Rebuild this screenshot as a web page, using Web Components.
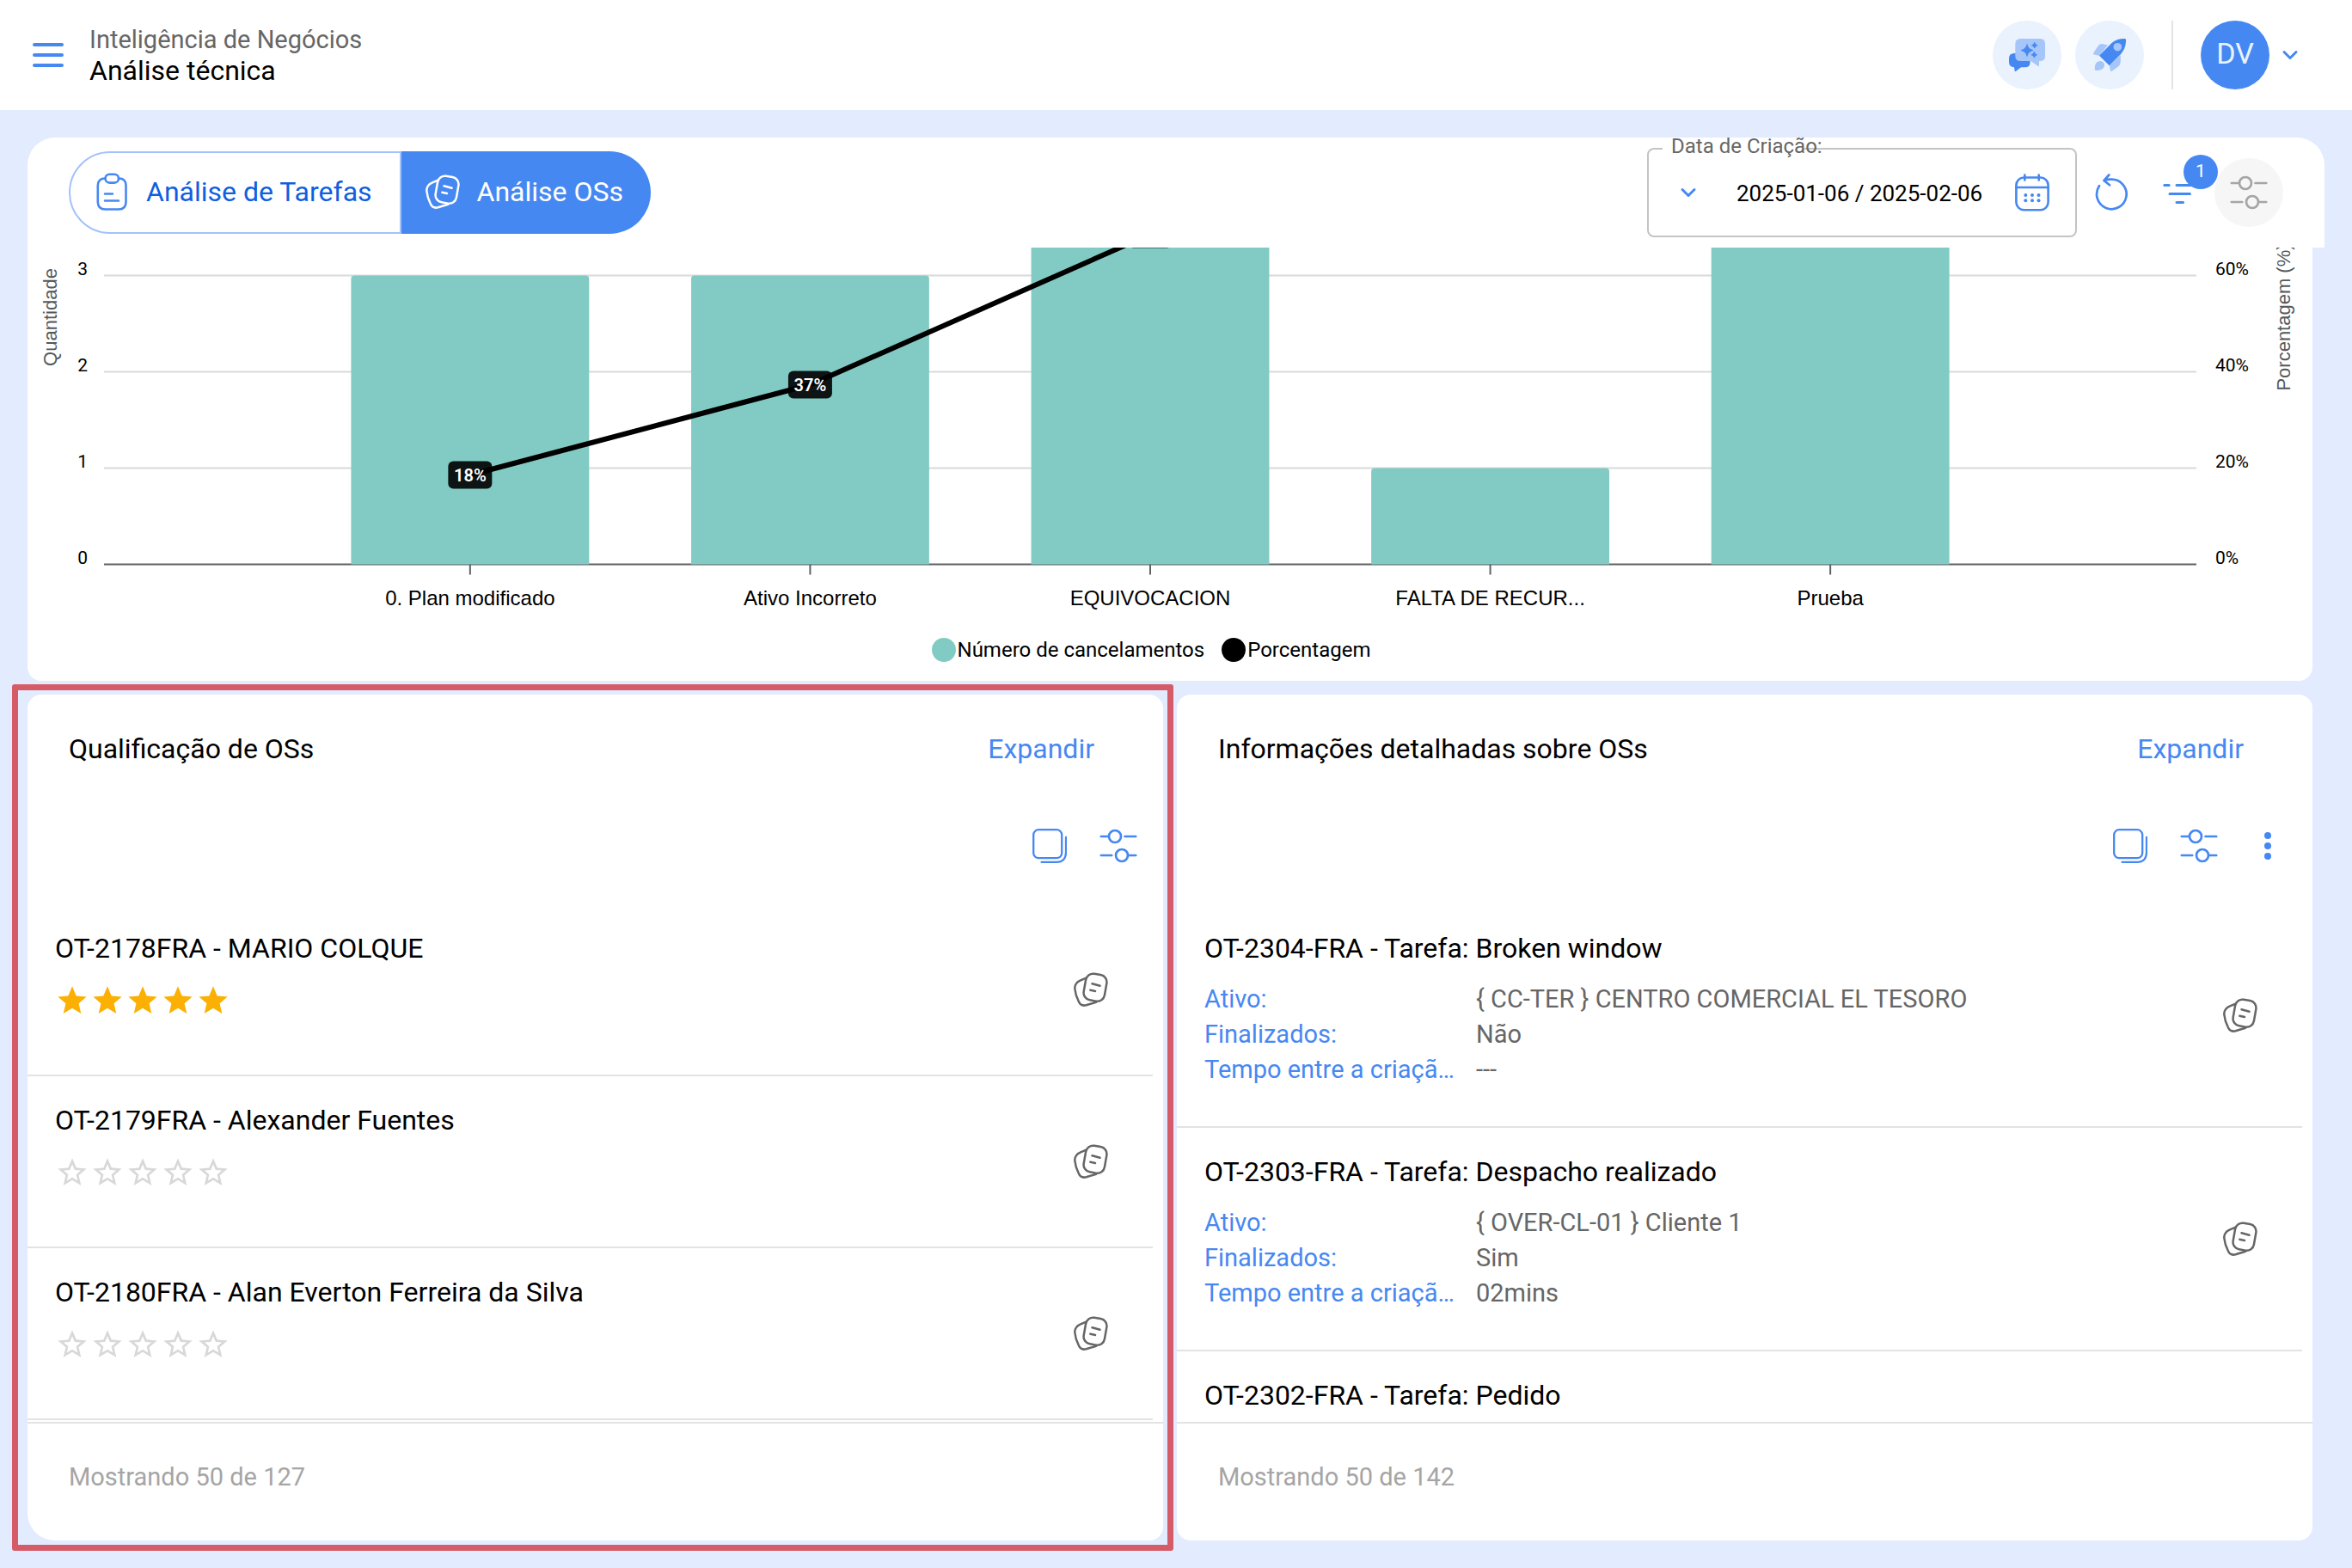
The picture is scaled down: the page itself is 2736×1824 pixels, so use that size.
<!DOCTYPE html>
<html lang="pt">
<head>
<meta charset="utf-8">
<title>Análise técnica</title>
<style>
  :root {
    --blue: #4688f2;
    --blue-dark: #0f5fe0;
    --blue-line: #a3c2fa;
    --page: #e2ecfe;
    --grey: #666;
    --line: #e3e3e3;
  }
  * { box-sizing: border-box; }
  body {
    margin: 0;
    height: 100vh;
    background: var(--page);
    color: #000;
    font: 32px/38px Roboto, "Liberation Sans", sans-serif;
  }
</style>
</head>
<body>
<bi-app>
  <app-header slot="header" section="Inteligência de Negócios" heading="Análise técnica" initials="DV"></app-header>
  <app-toolbar slot="toolbar"></app-toolbar>
  <combo-chart slot="chart"></combo-chart>

  <data-card slot="card" heading="Qualificação de OSs" summary="Mostrando 50 de 127" highlighted>
    <icon-button slot="tools" icon="copy" label="Copiar"></icon-button>
    <icon-button slot="tools" icon="sliders" label="Configurar"></icon-button>
    <list-row heading="OT-2178FRA - MARIO COLQUE"><star-rating value="5"></star-rating></list-row>
    <list-row heading="OT-2179FRA - Alexander Fuentes"><star-rating value="0"></star-rating></list-row>
    <list-row heading="OT-2180FRA - Alan Everton Ferreira da Silva"><star-rating value="0"></star-rating></list-row>
  </data-card>

  <data-card slot="card" heading="Informações detalhadas sobre OSs" summary="Mostrando 50 de 142">
    <icon-button slot="tools" icon="copy" label="Copiar"></icon-button>
    <icon-button slot="tools" icon="sliders" label="Configurar"></icon-button>
    <icon-button slot="tools" icon="dots" label="Mais opções"></icon-button>
    <list-row tall heading="OT-2304-FRA - Tarefa: Broken window"><order-facts asset="{ CC-TER } CENTRO COMERCIAL EL TESORO" finished="Não" elapsed="---"></order-facts></list-row>
    <list-row tall heading="OT-2303-FRA - Tarefa: Despacho realizado"><order-facts asset="{ OVER-CL-01 } Cliente 1" finished="Sim" elapsed="02mins"></order-facts></list-row>
    <list-row tall heading="OT-2302-FRA - Tarefa: Pedido"></list-row>
  </data-card>
</bi-app>

<script>
const line = (w) => `fill="none" stroke="currentColor" stroke-width="${w}" stroke-linecap="round" stroke-linejoin="round"`;
const ICONS = {
  menu: [40, 40, `<g ${line(4)}><path d="M4 8H36M4 20H36M4 32H36"/></g>`],
  chevron: [24, 24, `<g ${line(3)}><path d="M5 8.500L12 15.500L19 8.500"/></g>`],
  chat: [42, 38, `<path fill="#4688f2" d="M6 17H18Q24.500 17 24.500 23V28Q24.500 33.300 18.500 33.300H14L7.800 37.900Q6.800 38.300 6.600 37.200L6 33.300Q0 33 0 27V23Q0 17 6 17Z"/>
    <path fill="#a6c6f9" d="M13.500 0H36Q42 0 42 6V20Q42 26 36 26H35V31Q35 32.500 33.500 31.800L25.500 26H13.500Q7.300 26 7.300 20V6Q7.300 0 13.500 0Z"/>
    <path fill="#4688f2" d="M21 6.500Q22.200 12.300 28 13.500Q22.200 14.700 21 20.500Q19.800 14.700 14 13.500Q19.800 12.300 21 6.500ZM29.700 4.300Q30.300 7.100 33.100 7.700Q30.300 8.300 29.700 11.100Q29.100 8.300 26.300 7.700Q29.100 7.100 29.700 4.300ZM29.300 15.300Q29.900 18.100 32.700 18.700Q29.900 19.300 29.300 22.100Q28.700 19.300 25.900 18.700Q28.700 18.100 29.300 15.300Z" stroke="#4688f2" stroke-width=".8"/>`],
  rocket: [38, 38, `<g fill="#a6c6f9"><path d="M1 18.500Q-.4 18 .3 16.600L6 8Q7.500 6 10 6L17 7.500L7 19.700Z"/><path d="M31.800 19V27Q31.500 30 29.500 32L21.800 37.700Q20.300 38.500 20 37L18.700 31Z"/><path d="M2 36.300C1.300 31 3 26.600 7.500 26C11.500 25.500 14.300 29.500 12.600 33C11 36 6.500 37.600 2.800 37Q2.100 37 2 36.300Z"/></g>
    <path fill="#4688f2" d="M7 19.700L21 5.500C26 1 31 0 36.800 0Q38 0 38 1.200C38.300 8 36 13.500 32 18L18.700 31.300Z"/><circle cx="28.300" cy="9.700" r="4.800" fill="#a6c6f9"/>`],
  clipboard: [40, 44, `<g ${line(2.6)}><path d="M12.500 6.500Q3.800 6.500 3.800 15V34Q3.800 42.500 12.500 42.500H28Q36.500 42.500 36.500 34V15Q36.500 6.500 28 6.500"/><rect x="12.500" y="1.800" width="15.500" height="9.800" rx="4.900"/><path d="M12 24.500H21M12 32.500H28"/></g>`],
  orders: [40, 40, `<g ${line(2.5)}><path d="M14 6.800L8 9.300C3 11.500 1 14 1.300 19C1.800 24.500 3.500 29.500 5.800 34C7.500 38 10.500 39.300 14.500 38.300L26 34.800"/><rect x="12.700" y="2.200" width="24.600" height="31" rx="8.500" transform="rotate(10 25 17.700)"/><path d="M21.500 13.300L30.500 15.800M19.300 20.700L25 22"/></g>`],
  calendar: [40, 44, `<g ${line(2.6)}><rect x="1.400" y="4.500" width="37.200" height="37.800" rx="9"/><path d="M1.400 16H38.600M11.300 1.500V7.500M27.700 1.500V7.500"/></g><g fill="currentColor"><circle cx="12.300" cy="25" r="2"/><circle cx="20" cy="25" r="2"/><circle cx="27.500" cy="25" r="2"/><circle cx="12.300" cy="31.300" r="2"/><circle cx="20" cy="31.300" r="2"/><circle cx="27.500" cy="31.300" r="2"/></g>`],
  refresh: [38, 44, `<g ${line(2.7)}><path d="M5 14.200A17.300 17.300 0 1 0 18.700 6.600Q15 6.500 10.500 8M16.300 1.500L10.500 8L17 13.300"/></g>`],
  filter: [40, 40, `<g ${line(3)}><path d="M1.800 11.500H7.200M16 11.500H38M8 21.500H31.500M16 31.500H23.500"/></g>`],
  sliders: [44, 44, `<g ${line(2.7)}><circle cx="18" cy="11" r="7"/><circle cx="26" cy="33" r="7"/><path d="M1.800 11H10M29.500 11H42.200M1.800 33H14.200M34 33H42.200"/></g>`],
  copy: [40, 40, `<g ${line(2.3)}><rect x="1.200" y="1.200" width="33" height="33" rx="6"/><path d="M39 9.800V28Q38.500 38.800 29 38.800H10.500"/></g>`],
  dots: [40, 40, `<g fill="currentColor"><circle cx="20" cy="8" r="4"/><circle cx="20" cy="20" r="4"/><circle cx="20" cy="32" r="4"/></g>`],
  star: [40, 40, `<path fill="currentColor" transform="scale(1.6667)" d="M12 17.270L18.180 21l-1.640-7.030L22 9.240l-7.190-.61L12 2 9.190 8.630 2 9.240l5.460 4.730L5.820 21z"/>`],
  starEmpty: [40, 40, `<path fill="currentColor" transform="scale(1.6667)" d="M22 9.240l-7.190-.62L12 2 9.190 8.630 2 9.240l5.460 4.730L5.820 21 12 17.270 18.180 21l-1.630-7.030L22 9.240zM12 15.400l-3.760 2.270 1-4.280-3.320-2.880 4.380-.38L12 6.100l1.710 4.040 4.380.38-3.320 2.880 1 4.280L12 15.400z"/>`]
};
const svg = (name) => {
  const [w, h, body] = ICONS[name];
  return `<svg width="${w}" height="${h}" viewBox="0 0 ${w} ${h}" aria-hidden="true">${body}</svg>`;
};
const RESET = `
  * { box-sizing: border-box; }
  svg { display: block; flex: none; }
  button { font: inherit; color: inherit; border: 0; padding: 0; margin: 0; background: none; cursor: pointer; }`;

class View extends HTMLElement {
  connectedCallback() {
    if (this.shadowRoot) return;
    this.attachShadow({ mode: "open" }).innerHTML = `<style>${RESET}${this.css()}</style>${this.html()}`;
    this.ready();
  }
  a(name) { return this.getAttribute(name) || ""; }
  css() { return ""; }
  html() { return ""; }
  ready() {}
}

customElements.define("icon-button", class extends View {
  css() { return `
    :host { display: block; flex: none; color: var(--blue); }
    button { position: relative; width: 80px; height: 80px; border-radius: 50%; display: flex; align-items: center; justify-content: center; background: var(--button-bg, none); }
    .badge { position: absolute; top: -4px; right: -4px; width: 40px; height: 40px; border-radius: 50%; background: var(--blue); color: #fff; font-size: 21px; line-height: 38px; text-align: center; }`; }
  html() {
    const badge = this.a("badge");
    return `<button type="button" aria-label="${this.a("label")}">${svg(this.a("icon"))}${badge ? `<span class="badge">${badge}</span>` : ""}</button>`;
  }
});

customElements.define("app-header", class extends View {
  css() { return `
    :host { display: flex; align-items: center; height: 128px; padding: 0 60px 0 16px; background: #fff; }
    .titles { flex: 1; margin-left: 8px; }
    p, h1 { margin: 0; font-weight: 400; line-height: 36px; }
    p { font-size: 29px; color: var(--grey); }
    h1 { font-size: 32px; }
    .actions { display: flex; align-items: center; gap: 16px; --button-bg: #e9f2fd; }
    .rule { width: 2px; height: 80px; margin: 0 16px; background: var(--line); }
    .user { display: flex; align-items: center; gap: 12px; color: var(--blue); }
    .avatar { width: 80px; height: 80px; border-radius: 50%; background: var(--blue); color: #e9f2fd; font-size: 34px; line-height: 76px; text-align: center; }`; }
  html() { return `
    <icon-button icon="menu" label="Menu"></icon-button>
    <div class="titles"><p>${this.a("section")}</p><h1>${this.a("heading")}</h1></div>
    <div class="actions">
      <icon-button icon="chat" label="Assistente"></icon-button>
      <icon-button icon="rocket" label="Novidades"></icon-button>
      <span class="rule"></span>
      <button class="user" type="button"><span class="avatar">${this.a("initials")}</span>${svg("chevron")}</button>
    </div>`; }
});

customElements.define("date-field", class extends View {
  css() { return `
    :host { position: relative; display: flex; align-items: center; width: 500px; height: 104px; padding: 0 10px 0 6px; border: 2px solid #c4c4c4; border-radius: 8px; }
    .notch { position: absolute; top: -2px; left: 16px; width: 164px; height: 2px; background: #fff; }
    label { position: absolute; top: -18px; left: 26px; font-size: 24px; line-height: 28px; color: var(--grey); white-space: nowrap; }
    input { flex: 1; min-width: 0; border: 0; outline: 0; padding: 2px 0 0 16px; background: none; font: inherit; font-size: 26px; line-height: 36px; color: #000; }`; }
  html() { return `
    <span class="notch"></span><label for="range">${this.a("label")}</label>
    <icon-button icon="chevron" label="Abrir períodos"></icon-button>
    <input id="range" type="text" value="${this.a("value")}">
    <icon-button icon="calendar" label="Abrir calendário"></icon-button>`; }
});

customElements.define("app-toolbar", class extends View {
  css() { return `
    :host { display: flex; align-items: center; height: 128px; padding: 0 48px; background: #fff; border-radius: 32px 32px 0 0; }
    .tabs { display: flex; flex: none; height: 96px; margin-right: auto; }
    .tabs button { display: flex; align-items: center; gap: 20px; padding: 0 32px 4px 28px; font-size: 32px; white-space: nowrap; }
    .tabs button:first-child { padding-bottom: 2px; border: 2px solid var(--blue-line); border-radius: 48px 0 0 48px; color: var(--blue-dark); }
    .tabs button:first-child svg { color: var(--blue); }
    .tabs button:last-child { background: var(--blue); color: #fff; border-radius: 0 48px 48px 0; padding-bottom: 2px; }
    .muted { --button-bg: #f6f6f6; color: #a5a5a5; }
    .raised { z-index: 1; }`; }
  html() { return `
    <div class="tabs">
      <button type="button">${svg("clipboard")}Análise de Tarefas</button>
      <button type="button">${svg("orders")}Análise OSs</button>
    </div>
    <date-field label="Data de Criação:" value="2025-01-06 / 2025-02-06"></date-field>
    <icon-button icon="refresh" label="Atualizar"></icon-button>
    <icon-button class="raised" icon="filter" label="Filtros" badge="1"></icon-button>
    <icon-button class="muted" icon="sliders" label="Configurar"></icon-button>`; }
});

customElements.define("combo-chart", class extends View {
  css() { return `
    :host { display: flex; flex-direction: column; justify-content: flex-end; height: 504px; overflow: hidden; background: #fff; border-radius: 0 0 16px 16px; }
    #plot { flex: none; height: 640px; }
    #plot svg { width: 100%; }
    text { font-family: Roboto, "Liberation Sans", sans-serif; }
    .tick { font-size: 21px; }
    .cat { font: 24px "Liberation Sans", sans-serif; }
    .title { font: 22px "Liberation Sans", sans-serif; fill: #53595c; }
    .tag { font-size: 20px; font-weight: 600; fill: #fff; }
    ul { flex: none; display: flex; justify-content: center; gap: 20px; list-style: none; margin: 14px 134px 22px 90px; padding: 0; font-size: 24px; line-height: 28px; }
    li { display: flex; gap: 2px; }
    i { width: 28px; height: 28px; border-radius: 50%; background: var(--c); }`; }
  html() { return `<div id="plot"></div>
    <ul><li><i style="--c:#81cbc4"></i>Número de cancelamentos</li><li><i style="--c:#000"></i>Porcentagem</li></ul>`; }
  ready() {
    this.draw();
    new ResizeObserver(() => this.draw()).observe(this);
  }
  draw() {
    const data = [["0. Plan modificado", 3], ["Ativo Incorreto", 3], ["EQUIVOCACION", 5], ["FALTA DE RECUR...", 1], ["Prueba", 4]];
    const W = this.clientWidth, H = 640, L = 89, R = W - 135, base = 568.5, step = 112;
    /* everything above this line is scrolled out of the panel */
    const top = 136;
    const inset = (R - L) * 0.0937, slot = (R - L - inset * 2) / data.length, bar = slot * 0.7;
    const total = data.reduce((s, d) => s + d[1], 0);
    let grid = "", bars = "", tags = "", pts = [], sum = 0;
    for (let i = 0; base - i * step > top; i++) {
      const y = base - i * step;
      grid += `<path d="M${L} ${y}H${R}" stroke="${i ? "#dadada" : "#5f6163"}" stroke-width="2"/>
        <text class="tick" x="${L - 19}" y="${y - 1}" text-anchor="end">${i}</text><text class="tick" x="${R + 22}" y="${y - 1}">${i * 20}%</text>`;
    }
    data.forEach(([name, v], i) => {
      const cx = L + inset + slot * (i + 0.5), x = cx - bar / 2, y = base - v * step;
      sum += v;
      const py = base - (sum / total) * 5 * step + 1;
      pts.push(`${cx} ${py}`);
      bars += `<path d="M${x} ${base}V${y + 4}q0 -4 4 -4H${x + bar - 4}q4 0 4 4V${base}Z" fill="#81cbc4"/>
        <path d="M${cx} ${base}v12" stroke="#5f6163" stroke-width="2"/>
        <text class="cat" x="${cx}" y="616" text-anchor="middle">${name}</text>`;
      tags += `<rect x="${cx - 25.5}" y="${py - 16}" width="51" height="32" rx="6" opacity=".9"/>`;
      if (py - 16 > top + 70) tags += `<text class="tag" x="${cx}" y="${py + 7}" text-anchor="middle">${Math.floor(sum / total * 100)}%</text>`;
    });
    this.shadowRoot.getElementById("plot").innerHTML = `<svg height="${H}" viewBox="0 0 ${W} ${H}" role="img" aria-label="Cancelamentos por motivo">
      ${grid}${bars}
      <polyline points="${pts.join(" ")}" fill="none" stroke="#000" stroke-width="6" stroke-linejoin="round"/>${tags}
      <text class="title" text-anchor="middle" transform="translate(34 281) rotate(-90)">Quantidade</text>
      <text class="title" text-anchor="middle" transform="translate(${W - 26} 281) rotate(-90)">Porcentagem (%)</text></svg>`;
  }
});

customElements.define("star-rating", class extends View {
  css() { return `:host { display: flex; gap: 1px; padding-top: 2px; color: #d8d8d8; } .on { color: #fbb003; }`; }
  html() {
    const v = +this.a("value");
    return [1, 2, 3, 4, 5].map((n) => `<span class="${n <= v ? "on" : ""}">${svg(n <= v ? "star" : "starEmpty")}</span>`).join("");
  }
});

customElements.define("order-facts", class extends View {
  css() { return `
    dl { display: grid; grid-template-columns: 300px 1fr; column-gap: 16px; margin: 0; font-size: 29px; line-height: 41px; }
    dt { color: var(--blue); white-space: nowrap; }
    dd { margin: 0; color: var(--grey); }
    :host { display: block; }`; }
  html() { return `<dl>
    <dt>Ativo:</dt><dd>${this.a("asset")}</dd>
    <dt>Finalizados:</dt><dd>${this.a("finished")}</dd>
    <dt>Tempo entre a criaçã…</dt><dd>${this.a("elapsed")}</dd></dl>`; }
});

customElements.define("list-row", class extends View {
  css() { return `
    :host { display: flex; align-items: center; flex: none; height: 200px; padding: 0 32px; border-bottom: 2px solid var(--line); }
    :host([tall]) { height: 260px; }
    .text { flex: 1; align-self: flex-start; padding-top: 32px; }
    h3 { margin: 0 0 20px; font: inherit; line-height: 38px; }
    icon-button { color: var(--grey); }`; }
  html() { return `<div class="text"><h3>${this.a("heading")}</h3><slot></slot></div><icon-button icon="orders" label="Ver OS"></icon-button>`; }
});

customElements.define("data-card", class extends View {
  css() { return `
    :host { position: relative; display: flex; flex: 1 1 0; min-width: 0; }
    section { flex: 1; min-width: 0; display: flex; flex-direction: column; background: #fff; border-radius: 16px; }
    :host([highlighted]) section { border-bottom-left-radius: 32px; }
    :host([highlighted])::after { content: ""; position: absolute; inset: -12px -12px -12px -18px; border: 7px solid #d65b68; border-radius: 3px; pointer-events: none; }
    header { display: flex; align-items: center; justify-content: space-between; height: 126px; padding: 0 80px 0 48px; }
    h2 { margin: 0; font: inherit; }
    header button { color: var(--blue); }
    .tools { display: flex; justify-content: flex-end; padding: 10px 12px 28px; }
    .list { flex: 1 1 0; min-height: 0; overflow: hidden; display: flex; flex-direction: column; padding-right: 12px; }
    footer { height: 138px; padding: 44px 48px 0; border-top: 2px solid var(--line); font-size: 29px; line-height: 36px; color: #a5a5a5; }`; }
  html() { return `<section>
    <header><h2>${this.a("heading")}</h2><button type="button">Expandir</button></header>
    <div class="tools"><slot name="tools"></slot></div>
    <div class="list"><slot></slot></div>
    <footer>${this.a("summary")}</footer></section>`; }
});

customElements.define("bi-app", class extends View {
  css() { return `
    :host { display: flex; flex-direction: column; height: 100vh; }
    main { flex: 1; min-height: 0; display: flex; flex-direction: column; padding: 32px; }
    .content { flex: 1; min-height: 0; display: flex; flex-direction: column; gap: 16px; padding-right: 14px; }
    .cards { flex: 1; min-height: 0; display: flex; gap: 16px; }`; }
  html() { return `<slot name="header"></slot>
    <main><slot name="toolbar"></slot>
      <div class="content"><slot name="chart"></slot><div class="cards"><slot name="card"></slot></div></div>
    </main>`; }
});
</script>
</body>
</html>
